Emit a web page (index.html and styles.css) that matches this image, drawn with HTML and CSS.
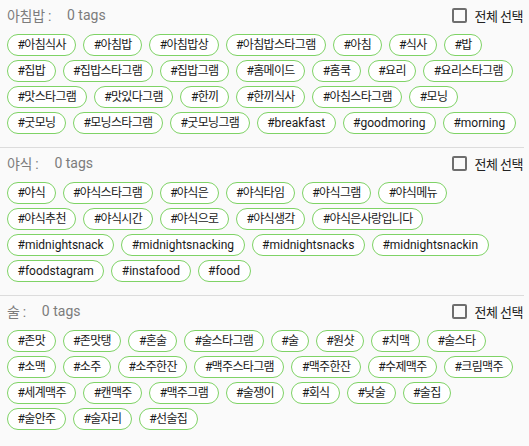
FILE: index.html
```html
<!DOCTYPE html>
<html lang="ko">
<head>
<meta charset="utf-8">
<link rel="stylesheet" href="styles.css">
</head>
<body>
<div class="page">
  <section class="group">
    <div class="head">
      <div class="title"><span class="label">아침밥 :</span><span class="count">0 tags</span></div>
      <label class="all"><span class="box"></span><span class="all-text">전체 선택</span></label>
    </div>
    <div class="rows">
      <div class="row"><span class="chip k">#아침식사</span><span class="chip k">#아침밥</span><span class="chip k">#아침밥상</span><span class="chip k">#아침밥스타그램</span><span class="chip k">#아침</span><span class="chip k">#식사</span><span class="chip k">#밥</span></div>
      <div class="row"><span class="chip k">#집밥</span><span class="chip k">#집밥스타그램</span><span class="chip k">#집밥그램</span><span class="chip k">#홈메이드</span><span class="chip k">#홈쿡</span><span class="chip k">#요리</span><span class="chip k">#요리스타그램</span></div>
      <div class="row"><span class="chip k">#맛스타그램</span><span class="chip k">#맛있다그램</span><span class="chip k">#한끼</span><span class="chip k">#한끼식사</span><span class="chip k">#아침스타그램</span><span class="chip k">#모닝</span></div>
      <div class="row"><span class="chip k">#굿모닝</span><span class="chip k">#모닝스타그램</span><span class="chip k">#굿모닝그램</span><span class="chip">#breakfast</span><span class="chip">#goodmoring</span><span class="chip">#morning</span></div>
    </div>
  </section>
  <section class="group">
    <div class="head">
      <div class="title"><span class="label">야식 :</span><span class="count">0 tags</span></div>
      <label class="all"><span class="box"></span><span class="all-text">전체 선택</span></label>
    </div>
    <div class="rows">
      <div class="row"><span class="chip k">#야식</span><span class="chip k">#야식스타그램</span><span class="chip k">#야식은</span><span class="chip k">#야식타임</span><span class="chip k">#야식그램</span><span class="chip k">#야식메뉴</span></div>
      <div class="row"><span class="chip k">#야식추천</span><span class="chip k">#야식시간</span><span class="chip k">#야식으로</span><span class="chip k">#야식생각</span><span class="chip k">#야식은사랑입니다</span></div>
      <div class="row"><span class="chip">#midnightsnack</span><span class="chip">#midnightsnacking</span><span class="chip">#midnightsnacks</span><span class="chip">#midnightsnackin</span></div>
      <div class="row"><span class="chip">#foodstagram</span><span class="chip">#instafood</span><span class="chip">#food</span></div>
    </div>
  </section>
  <section class="group last">
    <div class="head">
      <div class="title"><span class="label">술 :</span><span class="count">0 tags</span></div>
      <label class="all"><span class="box"></span><span class="all-text">전체 선택</span></label>
    </div>
    <div class="rows">
      <div class="row"><span class="chip k">#존맛</span><span class="chip k">#존맛탱</span><span class="chip k">#혼술</span><span class="chip k">#술스타그램</span><span class="chip k">#술</span><span class="chip k">#원샷</span><span class="chip k">#치맥</span><span class="chip k">#술스타</span></div>
      <div class="row"><span class="chip k">#소맥</span><span class="chip k">#소주</span><span class="chip k">#소주한잔</span><span class="chip k">#맥주스타그램</span><span class="chip k">#맥주한잔</span><span class="chip k">#수제맥주</span><span class="chip k">#크림맥주</span></div>
      <div class="row"><span class="chip k">#세계맥주</span><span class="chip k">#캔맥주</span><span class="chip k">#맥주그램</span><span class="chip k">#술쟁이</span><span class="chip k">#회식</span><span class="chip k">#낮술</span><span class="chip k">#술집</span></div>
      <div class="row"><span class="chip k">#술안주</span><span class="chip k">#술자리</span><span class="chip k">#선술집</span></div>
    </div>
  </section>
</div>
</body>
</html>
```

FILE: styles.css
```css
html, body {
  margin: 0;
  padding: 0;
  background: #fafafa;
}
body {
  font-family: Roboto, "Noto Sans CJK KR", sans-serif;
  color: #222;
}
.page {
  width: 524px;
}
.group {
  padding: 5px 0 13px 0;
  border-bottom: 1px solid #dcdcdc;
}
.group.last {
  border-bottom: none;
}
.head {
  height: 20px;
  display: flex;
  align-items: center;
  justify-content: space-between;
  padding-left: 7px;
  padding-right: 1px;
}
.title {
  display: flex;
  align-items: center;
  gap: 16px;
  font-size: 14px;
  color: #7c7c7c;
}
.label {
  letter-spacing: -0.3px;
}
.all {
  display: flex;
  align-items: center;
  gap: 7px;
}
.box {
  width: 11px;
  height: 11px;
  border: 2px solid #6e6e6e;
  border-radius: 2px;
}
.all-text {
  font-size: 13px;
  letter-spacing: -0.5px;
  color: #222;
}
.rows {
  margin-top: 9px;
  padding-left: 7px;
  display: flex;
  flex-direction: column;
  gap: 4px;
}
.row {
  display: flex;
  gap: 7px;
}
.chip {
  height: 20px;
  line-height: 20px;
  padding: 0 9.5px;
  border: 1px solid #7fd366;
  border-radius: 11px;
  background: #fff;
  font-size: 12px;
  color: #1a1a1a;
  white-space: nowrap;
}
.chip.k {
  letter-spacing: -0.65px;
}
```
